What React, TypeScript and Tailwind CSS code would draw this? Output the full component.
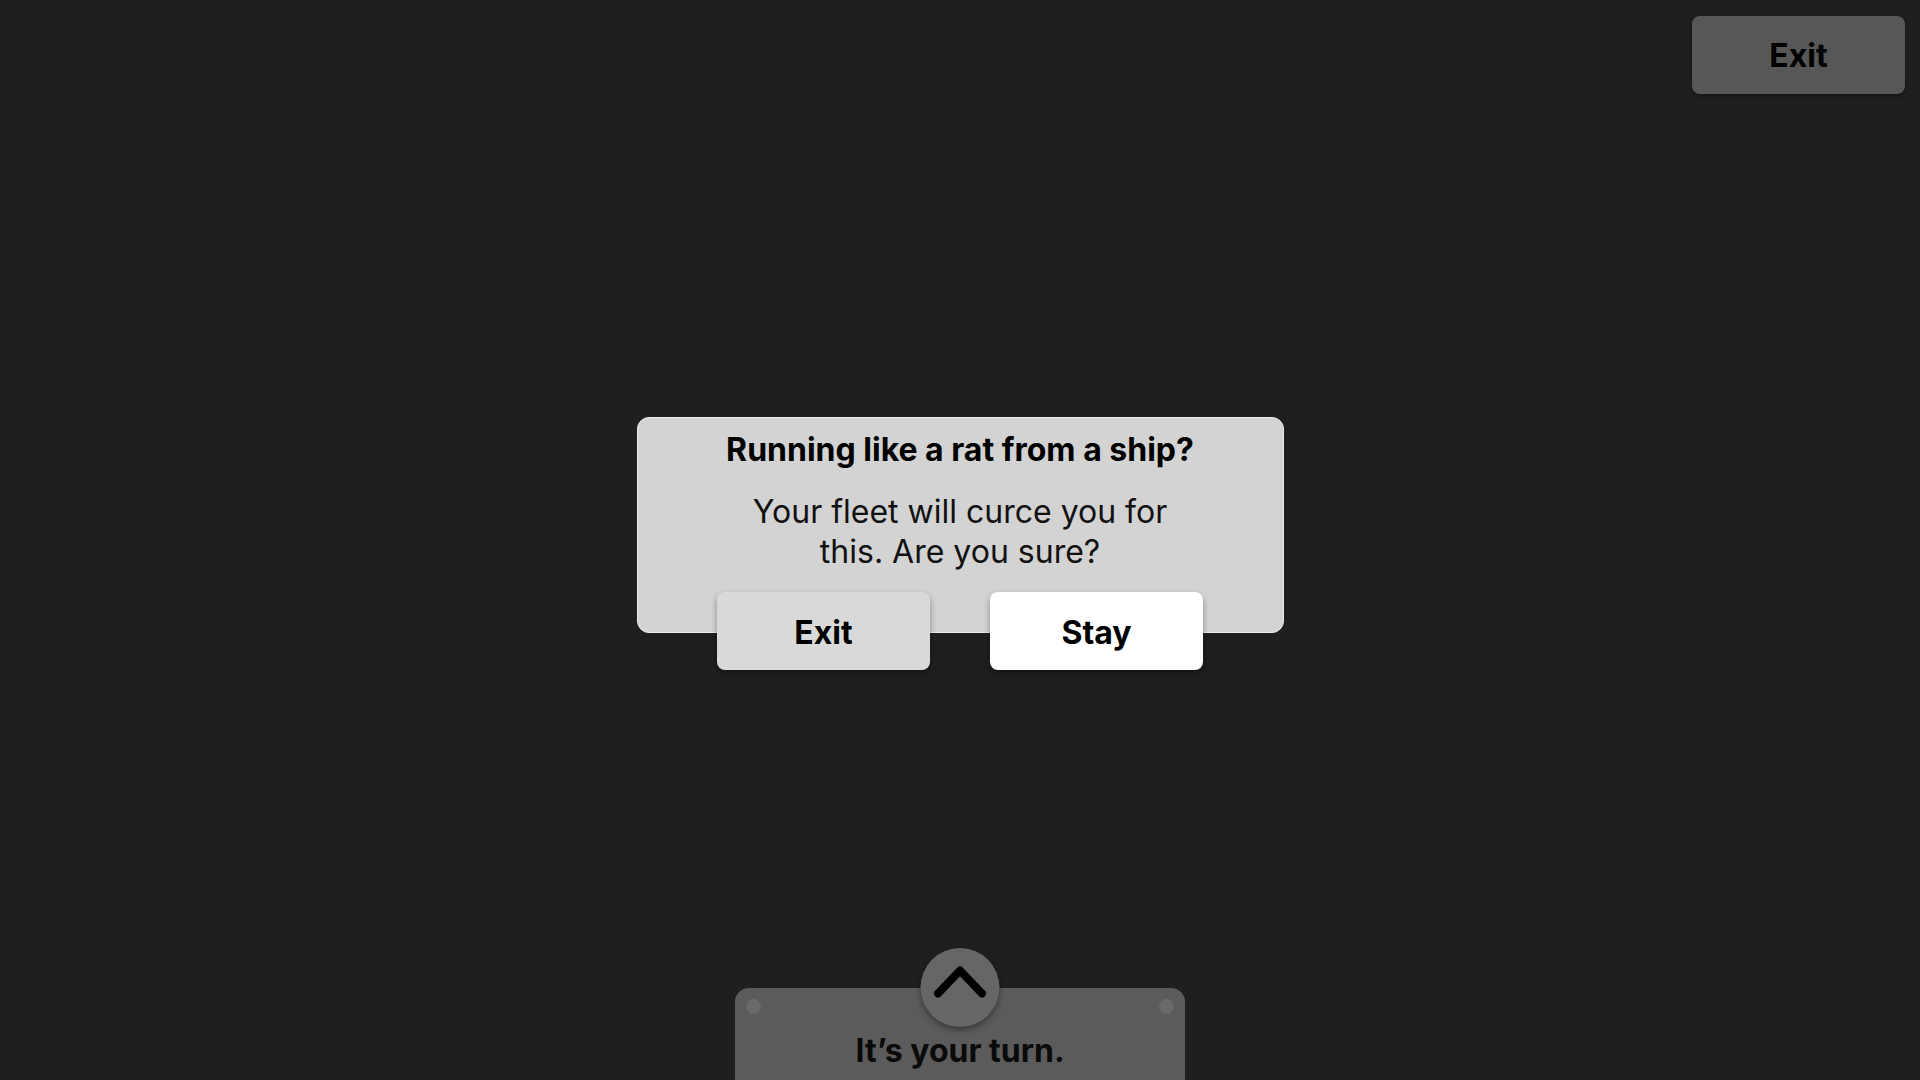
import React from "react";

export default function App() {
  return (
    <div
      className="relative h-screen w-full overflow-hidden bg-[#1f1f1f]"
      style={{ fontFamily: "Inter, 'Noto Sans', sans-serif" }}
    >
      <button className="absolute right-[15px] top-[16px] flex h-[78px] w-[213px] items-center justify-center rounded-[8px] bg-[#575757] pt-[2px] text-[32px] font-bold text-black shadow-[0_2px_4px_rgba(0,0,0,0.35)]">
        Exit
      </button>

      <div className="flex h-full flex-col items-center justify-center">
        <div className="mt-[8px] pb-[38px]">
          <div className="flex h-[216px] w-[647px] flex-col items-center rounded-[12px] border border-[#ececec] bg-[#d3d3d3] pt-[14px]">
            <h1 className="text-[32px] font-bold leading-[36px] text-black">
              Running like a rat from a ship?
            </h1>
            <p className="mt-[24px] max-w-[450px] text-center text-[32px] leading-[40px] text-[#111]">
              Your fleet will curce you for this. Are you sure?
            </p>
            <div className="mt-[20px] flex gap-[60px]">
              <button className="flex h-[78px] w-[213px] items-center justify-center rounded-[8px] bg-[#d9d9d9] pt-[3px] text-[32px] font-bold text-black shadow-[0_3px_6px_rgba(0,0,0,0.35)]">
                Exit
              </button>
              <button className="flex h-[78px] w-[213px] items-center justify-center rounded-[8px] bg-white pt-[3px] text-[32px] font-bold text-black shadow-[0_3px_6px_rgba(0,0,0,0.35)]">
                Stay
              </button>
            </div>
          </div>
        </div>
      </div>

      <div className="absolute left-1/2 top-[988px] h-[200px] w-[450px] -translate-x-1/2 rounded-[14px] bg-[#5b5b5b]">
        <div className="absolute left-[11px] top-[11px] h-[15px] w-[15px] rounded-full bg-[#6a6a6a]" />
        <div className="absolute right-[11px] top-[11px] h-[15px] w-[15px] rounded-full bg-[#6a6a6a]" />
        <div className="absolute left-1/2 top-[-40px] flex h-[79px] w-[79px] -translate-x-1/2 items-center justify-center rounded-full bg-[#666666] shadow-[0_3px_6px_rgba(0,0,0,0.4)]">
          <svg width="79" height="79" viewBox="0 0 79 79" fill="none">
            <path
              d="M17.5 45.5 L39.5 22.5 L61.5 45.5"
              stroke="#000"
              strokeWidth="8"
              strokeLinecap="round"
              strokeLinejoin="round"
            />
          </svg>
        </div>
        <p className="pt-[45px] text-center text-[32px] font-bold leading-[36px] text-[#0a0a0a]">
          It’s your turn.
        </p>
      </div>
    </div>
  );
}
